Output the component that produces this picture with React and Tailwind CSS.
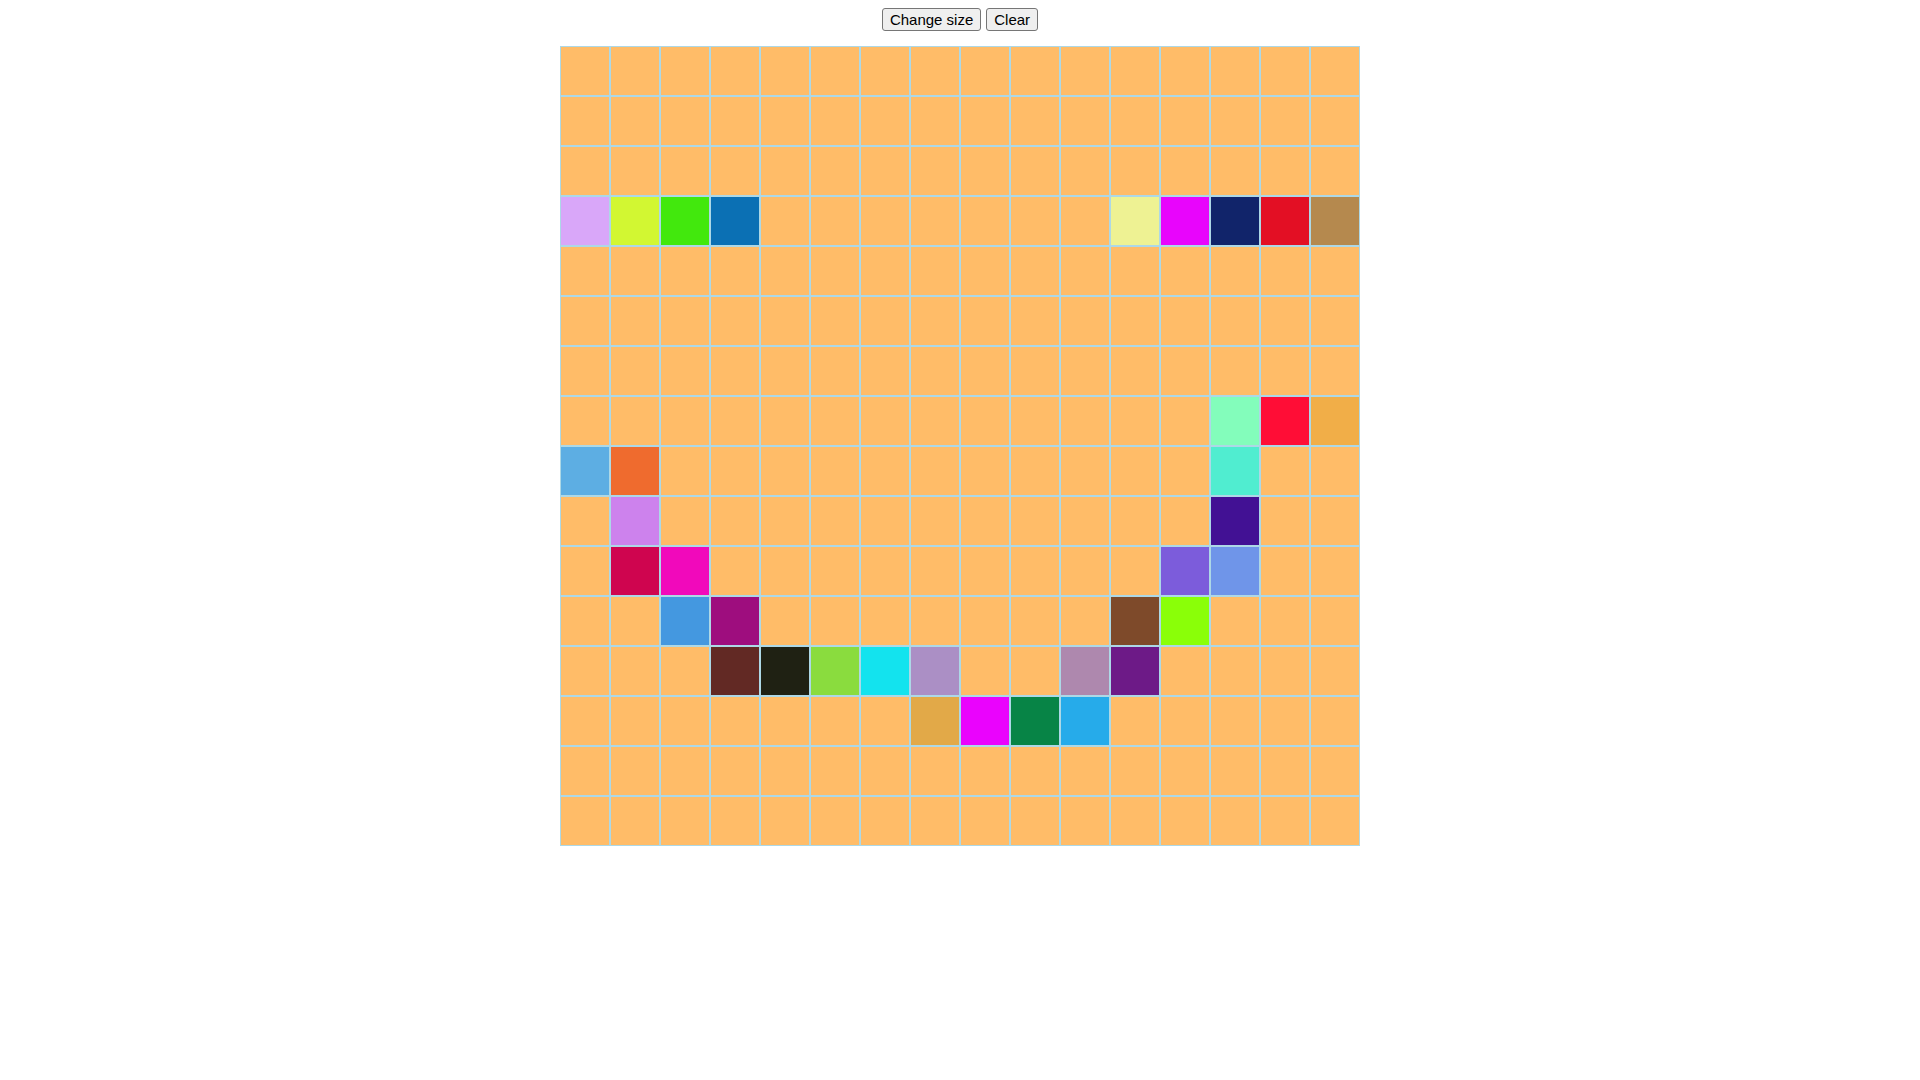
import React from 'react';

const SIZE = 16;

// painted cells, keyed by "row,col"
const painted = {
  '3,0': '#d9a7f9',
  '3,1': '#d2f732',
  '3,2': '#42e80d',
  '3,3': '#0b70b4',
  '3,11': '#eef293',
  '3,12': '#e805fc',
  '3,13': '#11246a',
  '3,14': '#e30f24',
  '3,15': '#b5894e',
  '7,13': '#83fdbb',
  '7,14': '#ff0d36',
  '7,15': '#f1ae48',
  '8,0': '#5daee3',
  '8,1': '#ef6b2e',
  '8,13': '#50edd0',
  '9,1': '#cd82ed',
  '9,13': '#421194',
  '10,1': '#cf054f',
  '10,2': '#f109bb',
  '10,12': '#7c5cdb',
  '10,13': '#6f95e9',
  '11,2': '#4498e0',
  '11,3': '#9e0d7e',
  '11,11': '#7e4a2a',
  '11,12': '#8aff08',
  '12,3': '#622924',
  '12,4': '#1f2113',
  '12,5': '#8adc3e',
  '12,6': '#13e3ee',
  '12,7': '#ab8fc5',
  '12,10': '#ae88ae',
  '12,11': '#6d1a87',
  '13,7': '#e2a948',
  '13,8': '#ea03fd',
  '13,9': '#078446',
  '13,10': '#26abea',
};

const cells = [];
for (let r = 0; r < SIZE; r++) {
  for (let c = 0; c < SIZE; c++) {
    cells.push({ key: `${r},${c}`, color: painted[`${r},${c}`] || '#ffbc68' });
  }
}

const btn =
  'bg-[#efefef] border border-[#767676] rounded-[3px] px-[7px] py-[2px] text-[15px] leading-[17px] text-black';

export default function App() {
  return (
    <div className="flex flex-col items-center pt-[8px] bg-white min-h-screen font-['Liberation_Sans',Arial,sans-serif]">
      <div className="flex gap-[5px]">
        <button className={btn}>Change size</button>
        <button className={btn}>Clear</button>
      </div>
      <div className="mt-[15px] grid grid-cols-[repeat(16,50px)]">
        {cells.map((cell) => (
          <div
            key={cell.key}
            className="h-[50px] box-border border border-[#add8e6]"
            style={{ backgroundColor: cell.color }}
          />
        ))}
      </div>
    </div>
  );
}
